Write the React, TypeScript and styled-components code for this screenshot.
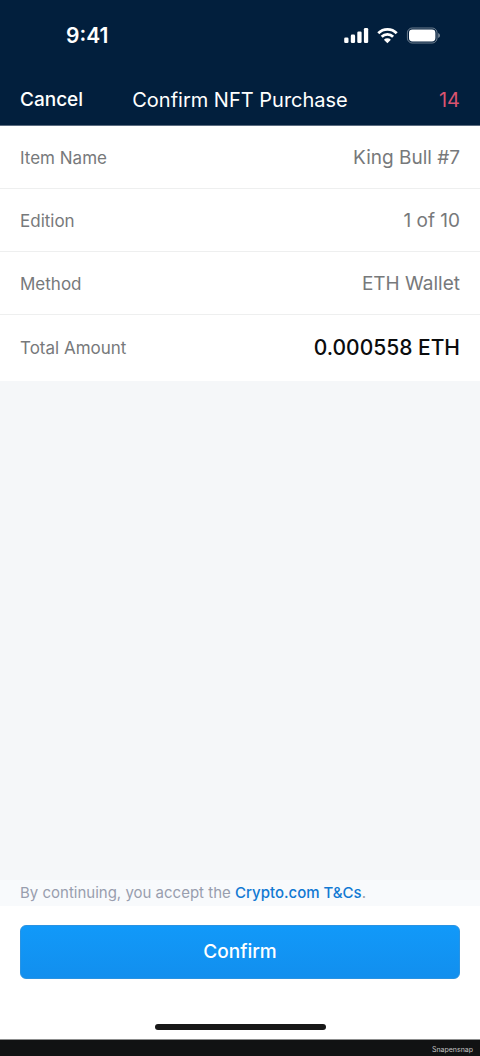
import React from 'react';
import styled, { createGlobalStyle } from 'styled-components';

const GlobalStyle = createGlobalStyle`
  *, *::before, *::after { box-sizing: border-box; }
  html, body, #root { margin: 0; min-height: 100vh; }
  body { font-family: Inter, "Liberation Sans", sans-serif; background: #f5f7f9; }
  h1, p, dl, dt, dd { margin: 0; font-weight: 400; }
`;

const Screen = styled.div`
  display: flex;
  flex-direction: column;
  min-height: 100vh;
`;

const Header = styled.header`
  background: #021f3d;
  color: #ffffff;
  border-bottom: 1px solid #5b6c80;
`;

const StatusBar = styled.div`
  display: flex;
  align-items: center;
  justify-content: space-between;
  height: 72px;
  padding: 0 40px 0 66px;
`;

const Clock = styled.time`
  font-size: 21px;
  line-height: 24px;
  font-weight: 600;
`;

const StatusIcons = styled.svg`
  display: block;
`;

const NavBar = styled.nav`
  display: grid;
  grid-template-columns: 1fr auto 1fr;
  align-items: center;
  height: 53px;
  padding: 2px 20px 0;
`;

const CancelButton = styled.button`
  justify-self: start;
  padding: 0;
  border: 0;
  background: none;
  color: inherit;
  font: 500 19px/24px Inter, "Liberation Sans", sans-serif;
  cursor: pointer;
`;

const Title = styled.h1`
  font-size: 20px;
  line-height: 24px;
`;

const Countdown = styled.span`
  justify-self: end;
  color: #d9536f;
  font-size: 20px;
  line-height: 24px;
`;

const Details = styled.dl`
  background: #ffffff;
`;

const Row = styled.div<{ $total?: boolean }>`
  display: flex;
  align-items: center;
  justify-content: space-between;
  height: ${({ $total }) => ($total ? 66 : 63)}px;
  padding: ${({ $total }) => ($total ? '0 20px' : '2px 20px 0')};
  border-bottom: ${({ $total }) => ($total ? '0' : '1px solid #eeefef')};
`;

const Label = styled.dt`
  color: #77797b;
  font-size: 17px;
  line-height: 24px;
`;

const Value = styled.dd<{ $total?: boolean }>`
  color: ${({ $total }) => ($total ? '#0b0c0d' : '#77797b')};
  font-size: ${({ $total }) => ($total ? 21 : 19)}px;
  font-weight: ${({ $total }) => ($total ? 500 : 400)};
  line-height: 24px;
`;

const Spacer = styled.main`
  flex: 1;
`;

const Terms = styled.p`
  padding: 1px 20px;
  background: #f8fafc;
  color: #989eae;
  font-size: 15px;
  line-height: 24px;
`;

const TermsLink = styled.a`
  color: #1179d3;
  font-weight: 500;
  text-decoration: none;
`;

const Footer = styled.footer`
  display: flex;
  flex-direction: column;
  align-items: center;
  gap: 45px;
  padding: 19px 20px 9px;
  background: #ffffff;
`;

const ConfirmButton = styled.button`
  width: 100%;
  height: 54px;
  border: 1px solid #2a93e2;
  border-radius: 6px;
  background: linear-gradient(#1199f9, #128fee);
  color: #ffffff;
  font: 500 19px/24px Inter, "Liberation Sans", sans-serif;
  cursor: pointer;
`;

const HomeIndicator = styled.div`
  width: 171px;
  height: 6px;
  border-radius: 3px;
  background: #171717;
`;

const CreditBar = styled.div`
  display: flex;
  align-items: center;
  justify-content: flex-end;
  height: 17px;
  padding: 3px 7px 0;
  border-top: 1px solid #8c8d8d;
  background: #111213;
  color: #c4c4c4;
  font-size: 7px;
  line-height: 12px;
`;

const rows = [
  { label: 'Item Name', value: 'King Bull #7' },
  { label: 'Edition', value: '1 of 10' },
  { label: 'Method', value: 'ETH Wallet' },
  { label: 'Total Amount', value: '0.000558 ETH', total: true },
];

export default function App() {
  return (
    <>
      <GlobalStyle />
      <Screen>
        <Header>
          <StatusBar>
            <Clock>9:41</Clock>
            <StatusIcons width="96" height="18" viewBox="0 0 96 18" aria-label="Signal, Wi-Fi and battery">
              <g fill="#fff">
                <rect x="0.2" y="10.4" width="4.3" height="5.6" rx="1.3" />
                <rect x="6.8" y="7.6" width="4.3" height="8.4" rx="1.3" />
                <rect x="13.3" y="4.4" width="4.3" height="11.6" rx="1.3" />
                <rect x="19.9" y="1" width="4.3" height="15" rx="1.3" />
              </g>
              <g fill="none" stroke="#fff" strokeWidth="2.8">
                <path d="M34.3 6.2 A12.8 12.8 0 0 1 52.7 6.2" />
                <path d="M37.7 9.8 A8 8 0 0 1 49.1 9.8" />
              </g>
              <path d="M43.4 16.2 L39.9 12.7 A5 5 0 0 1 46.9 12.7 Z" fill="#fff" />
              <rect x="63.4" y="1" width="29.6" height="15" rx="4.8" fill="none" stroke="#fff" strokeOpacity="0.42" />
              <rect x="65" y="2.6" width="26.4" height="11.8" rx="3.4" fill="#fff" />
              <path d="M94.2 6 Q96 6.8 96 8.5 Q96 10.2 94.2 11 Z" fill="#fff" fillOpacity="0.48" />
            </StatusIcons>
          </StatusBar>
          <NavBar>
            <CancelButton type="button">Cancel</CancelButton>
            <Title>Confirm NFT Purchase</Title>
            <Countdown>14</Countdown>
          </NavBar>
        </Header>
        <Details>
          {rows.map(({ label, value, total }) => (
            <Row key={label} $total={total}>
              <Label>{label}</Label>
              <Value $total={total}>{value}</Value>
            </Row>
          ))}
        </Details>
        <Spacer />
        <Terms>
          By continuing, you accept the <TermsLink href="#terms">Crypto.com T&amp;Cs</TermsLink>.
        </Terms>
        <Footer>
          <ConfirmButton type="button">Confirm</ConfirmButton>
          <HomeIndicator />
        </Footer>
        <CreditBar>Snapensnap</CreditBar>
      </Screen>
    </>
  );
}
